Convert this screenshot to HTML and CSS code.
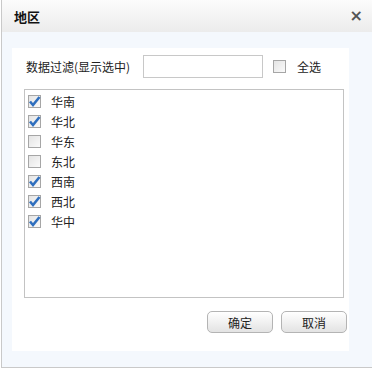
FILE: index.html
```html
<!DOCTYPE html>
<html lang="zh-CN">
<head>
    <meta charset="UTF-8">
    <title>地区</title>
    <link rel="stylesheet" href="styles.css">
</head>
<body>
    <div class="dialog">
        <div class="dialog-header">
            <span class="dialog-title">地区</span>
            <span class="dialog-close">×</span>
        </div>
        <div class="dialog-body">
            <div class="panel">
                <div class="filter-row">
                    <span class="filter-label">数据过滤(显示选中)</span>
                    <input type="text" class="filter-input">
                    <span class="check"></span>
                    <span class="check-all">全选</span>
                </div>
                <div class="list">
                    <div class="item"><span class="check checked"><svg viewBox="0 0 13 13"><path d="M2 6.5 L5 10 L11.5 2" /></svg></span>华南</div>
                    <div class="item"><span class="check checked"><svg viewBox="0 0 13 13"><path d="M2 6.5 L5 10 L11.5 2" /></svg></span>华北</div>
                    <div class="item"><span class="check"></span>华东</div>
                    <div class="item"><span class="check"></span>东北</div>
                    <div class="item"><span class="check checked"><svg viewBox="0 0 13 13"><path d="M2 6.5 L5 10 L11.5 2" /></svg></span>西南</div>
                    <div class="item"><span class="check checked"><svg viewBox="0 0 13 13"><path d="M2 6.5 L5 10 L11.5 2" /></svg></span>西北</div>
                    <div class="item"><span class="check checked"><svg viewBox="0 0 13 13"><path d="M2 6.5 L5 10 L11.5 2" /></svg></span>华中</div>
                </div>
                <div class="actions">
                    <button class="btn">确定</button>
                    <button class="btn">取消</button>
                </div>
            </div>
        </div>
    </div>
</body>
</html>
```

FILE: styles.css
```css
* {
    box-sizing: border-box;
}

body {
    margin: 0;
    background: #ffffff;
    font-family: "Noto Sans CJK SC", "Noto Sans", sans-serif;
    font-size: 12px;
    color: #222222;
}

.dialog {
    margin-left: 1px;
    width: 371px;
    height: 368px;
    border-left: 1px solid #c9c9c9;
    border-bottom: 1px solid #c9c9c9;
    display: flex;
    flex-direction: column;
}

.dialog-header {
    height: 32px;
    flex: none;
    display: flex;
    align-items: center;
    justify-content: space-between;
    padding: 0 9px 0 12px;
    background: linear-gradient(#fcfcfc, #ececec);
}

.dialog-title {
    font-size: 13px;
    font-weight: bold;
    color: #111111;
}

.dialog-close {
    font-family: "DejaVu Sans", sans-serif;
    font-size: 16px;
    font-weight: bold;
    color: #555555;
    line-height: 1;
}

.dialog-body {
    flex: 1;
    background: #f4f8fd;
    padding: 16px 23px 16px 10px;
}

.panel {
    height: 303px;
    background: #ffffff;
    padding: 7px 2px 0 12px;
}

.filter-row {
    display: flex;
    align-items: center;
    height: 23px;
    padding-left: 2px;
}

.filter-label {
    width: 104px;
    white-space: nowrap;
}

.filter-input {
    margin: 0 10px 0 13px;
    width: 120px;
    height: 23px;
    border: 1px solid #c8c8c8;
    padding: 2px 4px;
}

.check-all {
    margin-left: 11px;
}

.check {
    width: 13px;
    height: 13px;
    flex: none;
    border: 1px solid #a6a6a6;
    background: linear-gradient(135deg, #e4e4e4, #fafafa);
    display: inline-flex;
    overflow: visible;
}

.check svg {
    width: 13px;
    height: 13px;
    margin: -1px 0 0 -1px;
    overflow: visible;
    fill: none;
    stroke: #2f6fbe;
    stroke-width: 2.6;
}

.list {
    margin-top: 11px;
    width: 320px;
    height: 209px;
    border: 1px solid #c3c3c3;
    padding: 1px 0 0 3px;
}

.item {
    height: 20px;
    display: flex;
    align-items: center;
}

.item .check {
    margin-right: 10px;
}

.actions {
    margin-top: 13px;
    display: flex;
    justify-content: flex-end;
    gap: 8px;
}

.btn {
    width: 66px;
    height: 22px;
    font-family: inherit;
    font-size: 12px;
    color: #222222;
    border: 1px solid #b4b4b4;
    border-radius: 5px;
    background: linear-gradient(#ffffff, #e3e3e3);
    padding: 0;
}
```
